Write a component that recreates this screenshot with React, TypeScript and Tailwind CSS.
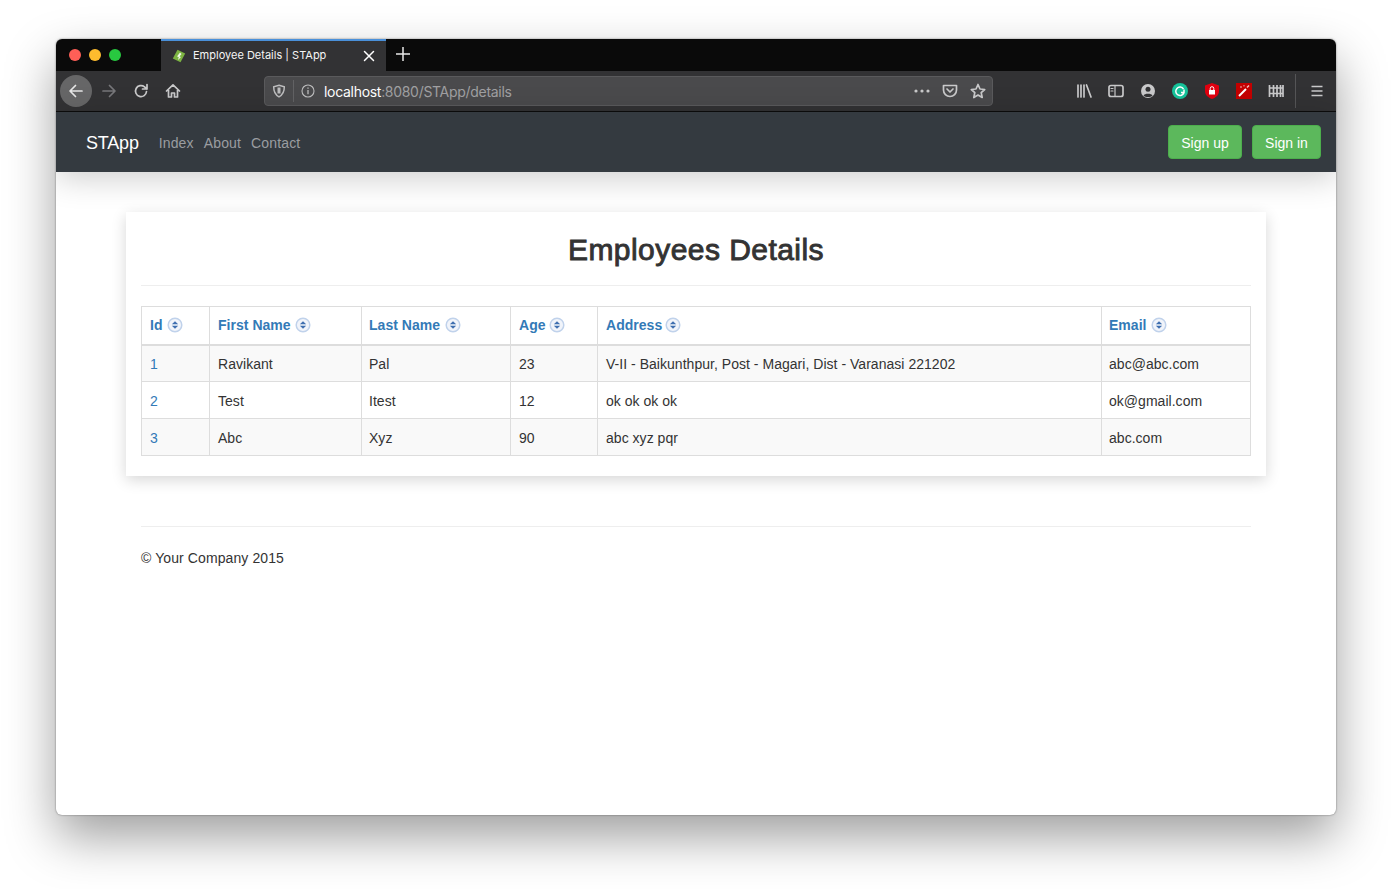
import React from 'react';

const rows = [
  { id: 1, first: 'Ravikant', last: 'Pal', age: 23, address: 'V-II - Baikunthpur, Post - Magari, Dist - Varanasi 221202', email: 'abc@abc.com', shade: true },
  { id: 2, first: 'Test', last: 'Itest', age: 12, address: 'ok ok ok ok', email: 'ok@gmail.com', shade: false },
  { id: 3, first: 'Abc', last: 'Xyz', age: 90, address: 'abc xyz pqr', email: 'abc.com', shade: true },
];

const columns = [
  { label: 'Id', width: 'w-[68px]', pad: 'pl-2', gap: 'ml-[4px]' },
  { label: 'First Name', width: 'w-[152px]', pad: 'pl-2', gap: 'ml-[4px]' },
  { label: 'Last Name', width: 'w-[149px]', pad: 'pl-[7px]', gap: 'ml-[5px]' },
  { label: 'Age', width: 'w-[87px]', pad: 'pl-2', gap: 'ml-[3px]' },
  { label: 'Address', width: 'w-[504px]', pad: 'pl-2', gap: 'ml-[3px]' },
  { label: 'Email', width: 'w-[149px]', pad: 'pl-[7px]', gap: 'ml-[4px]' },
];

const SortIcon: React.FC<{ className: string }> = ({ className }) => (
  <svg width="16" height="16" viewBox="0 0 16 16" className={`${className} shrink-0`}>
    <circle cx="8" cy="8" r="6.8" fill="#f1f4fa" stroke="#c0d2eb" strokeWidth="1.5" />
    <path d="M8 4.200 11.200 7.300H4.800zM8 11.800 4.800 8.700h6.400z" fill="#3f6fb0" />
  </svg>
);

const Stroke: React.FC<{ children: React.ReactNode; className?: string }> = ({ children, className }) => (
  <svg width="16" height="16" viewBox="0 0 16 16" fill="none" stroke="currentColor" strokeWidth="1.7" strokeLinecap="round" strokeLinejoin="round" className={className}>
    {children}
  </svg>
);

const BrowserChrome = () => (
  <>
    {/* tab strip */}
    <div className="h-8 bg-[#0a0a0a] flex items-stretch">
      <div className="w-[105px] flex items-center pl-[13px] gap-2">
        <span className="w-3 h-3 rounded-full bg-[#ff5f57]" />
        <span className="w-3 h-3 rounded-full bg-[#febc2e]" />
        <span className="w-3 h-3 rounded-full bg-[#28c840]" />
      </div>
      <div className="w-[225px] bg-[#323234] border-t-2 border-[#4a90d9] flex items-center pl-[11px] pr-[11px] text-[#f5f5f5] text-[11px] font-['Inter',sans-serif]">
        <svg width="14" height="14" viewBox="0 0 14 14" className="shrink-0">
          <path d="M5.500.800 13.200 4.500 8.500 13.200.800 9.500z" fill="#7cb342" />
          <path d="M8 3.500 9.500 5 7.500 7.500 9 8 6 11 6.800 8 5 7.500z" fill="#f1f8e9" />
        </svg>
        <span className="ml-[7px] mb-[2px] whitespace-nowrap">Employee Details | STApp</span>
        <svg width="12" height="12" viewBox="0 0 12 12" className="ml-auto text-white" stroke="currentColor" strokeWidth="1.5" strokeLinecap="round">
          <path d="M1.500 1.500l9 9M10.500 1.500l-9 9" />
        </svg>
      </div>
      <div className="flex items-center pl-[10px] pb-[2px] text-[#e8e8e8]">
        <svg width="14" height="14" viewBox="0 0 14 14" stroke="currentColor" strokeWidth="1.500">
          <path d="M7 0v14M0 7h14" />
        </svg>
      </div>
    </div>
    {/* toolbar */}
    <div className="h-[41px] bg-[#323234] border-b border-[#0c0c0c] flex items-center text-[#c9c9ca]">
      <div className="w-8 h-8 ml-[4px] rounded-full bg-[#666667] flex items-center justify-center text-[#e6e6e6]">
        <Stroke><path d="M14 8H2.500M7.500 2.500 2 8l5.500 5.500" /></Stroke>
      </div>
      <Stroke className="ml-[9px] text-[#77777a]"><path d="M2 8h11.500M8.500 2.500 14 8l-5.500 5.500" /></Stroke>
      <Stroke className="ml-[16px]"><path d="M13.500 8.500A5.500 5.500 0 1 1 11.500 3.800L14 6M14 1.500V6H9.500" /></Stroke>
      <Stroke className="ml-4"><path d="M1.500 8 8 1.800 14.500 8M3.500 7v7h3v-4h3v4h3V7" /></Stroke>
      <div className="ml-[83px] w-[729px] h-[30px] rounded-[4px] bg-[#4a4a4c] border border-[#5a5a5c] flex items-center text-[14px] font-['Inter',sans-serif]">
        <svg width="14" height="14" viewBox="0 0 14 14" fill="none" stroke="currentColor" strokeWidth="1.500" className="ml-[7px] text-[#bdbdbe]">
          <path d="M7 1.200 12.300 2.800C12.400 8 10.500 11 7 12.800 3.500 11 1.600 8 1.700 2.800z" />
          <path d="M7 3.500v6" strokeWidth="3" />
        </svg>
        <div className="w-px h-[22px] bg-[#626264] ml-[7px]" />
        <svg width="14" height="14" viewBox="0 0 14 14" fill="none" stroke="currentColor" strokeWidth="1.100" className="ml-[7px] text-[#bdbdbe]">
          <circle cx="7" cy="7" r="6" />
          <path d="M7 6v4.200M7 3.400v1.300" strokeWidth="1.300" />
        </svg>
        <span className="ml-[9px] mt-[2px] text-white leading-none tracking-[-0.3px]">localhost<span className="text-[#a0a0a2]">:8080/STApp/details</span></span>
        <div className="ml-auto flex items-center">
          <svg width="18" height="6" viewBox="0 0 18 6" fill="currentColor"><circle cx="3" cy="3" r="1.600" /><circle cx="9" cy="3" r="1.600" /><circle cx="15" cy="3" r="1.600" /></svg>
          <Stroke className="ml-[11px]"><path d="M1.500 2.500h13V7a6.500 6.500 0 0 1-13 0zM5 6l3 3 3-3" /></Stroke>
          <Stroke className="ml-3 mr-[6px]"><path d="M8 1.500 10 6l4.700.500-3.500 3.200 1 4.800L8 12l-4.200 2.500 1-4.800L1.300 6.500 6 6z" /></Stroke>
        </div>
      </div>
      <div className="ml-[83px] flex items-center">
        <Stroke><path d="M2 2v12M5 2v12M8 2v12M10.500 2 15 14" /></Stroke>
        <Stroke className="ml-4"><rect x="1" y="2.500" width="14" height="11" rx="2" /><path d="M7 2.500v11M3 5.500h2M3 8h2" strokeWidth="1.200" /></Stroke>
        <svg width="16" height="16" viewBox="0 0 16 16" className="ml-4">
          <circle cx="8" cy="8" r="7" fill="currentColor" />
          <circle cx="8" cy="6.300" r="2.500" fill="#323234" />
          <path d="M3.500 12.500c1-2.500 8-2.500 9 0-2 2-7 2-9 0z" fill="#323234" />
        </svg>
        <svg width="16" height="16" viewBox="0 0 16 16" className="ml-4" fill="none">
          <circle cx="8" cy="8" r="8" fill="#15c39a" />
          <path d="M11.500 6A4.200 4.200 0 1 0 12 9.500M12 6.500V9.500H9" stroke="#fff" strokeWidth="1.500" />
        </svg>
        <svg width="14" height="16" viewBox="0 0 14 16" className="ml-[17px]">
          <path d="M7 0 14 2.500V8c0 4-3 6.500-7 8-4-1.500-7-4-7-8V2.500z" fill="#e0000f" />
          <rect x="4" y="7" width="6" height="4.500" fill="#fff" />
          <path d="M5.200 7V5.500a1.800 1.800 0 0 1 3.600 0V7" fill="none" stroke="#fff" strokeWidth="1" />
        </svg>
        <svg width="16" height="16" viewBox="0 0 16 16" className="ml-[17px]">
          <rect width="16" height="16" fill="#c40000" />
          <path d="M3 13 10 6" stroke="#fff" strokeWidth="2" />
          <path d="M11 4.500 13 2.500" stroke="#f3c0c0" strokeWidth="1.500" />
          <circle cx="5" cy="4" r=".7" fill="#fff" />
          <circle cx="8" cy="2.800" r=".6" fill="#fff" />
        </svg>
        <Stroke className="ml-4"><path d="M1.500 2v12M5.500 2v12M9 2v12M12.500 2v12M15 2v12M1 5h14M1 10.500h14" strokeLinecap="butt" /></Stroke>
        <div className="w-px h-[34px] bg-[#555557] ml-[11px]" />
        <Stroke className="ml-[13px]"><path d="M2.500 3.500h11M2.500 8h11M2.500 12.500h11" strokeLinecap="butt" /></Stroke>
      </div>
    </div>
  </>
);

const Navbar = () => (
  <nav className="relative z-10 h-[60px] bg-[#343a40] flex items-center pl-[30px] pr-[15px] shadow-[0_6px_32px_rgba(0,0,0,0.2)]">
    <span className="mt-[2px] text-[18px] text-white tracking-[-0.2px]">STApp</span>
    <div className="ml-[20px] mt-[2px] flex gap-[10px] text-[14px] text-[#9a9da1] tracking-[0.15px]">
      <span>Index</span>
      <span>About</span>
      <span>Contact</span>
    </div>
    <div className="ml-auto flex gap-[10px]">
      <button className="w-[74px] h-[34px] pt-[2px] rounded-[4px] bg-[#5cb85c] border border-[#4cae4c] text-white text-[14px]">Sign up</button>
      <button className="w-[69px] h-[34px] pt-[2px] rounded-[4px] bg-[#5cb85c] border border-[#4cae4c] text-white text-[14px]">Sign in</button>
    </div>
  </nav>
);

const EmployeesTable = () => (
  <table className="table-fixed w-[1109px] border-collapse text-[14px] text-[#333333] mt-5 tracking-[0.03px]">
    <thead>
      <tr>
        {columns.map(col => (
          <th key={col.label} className={`${col.width} ${col.pad} h-[38px] border border-[#dddddd] border-b-2 text-left font-bold`}>
            <span className="flex items-center text-[#337ab7]">
              {col.label}
              <SortIcon className={col.gap} />
            </span>
          </th>
        ))}
      </tr>
    </thead>
    <tbody>
      {rows.map(row => {
        const cells = [row.id, row.first, row.last, row.age, row.address, row.email];
        return (
          <tr key={row.id} className={row.shade ? 'bg-[#f9f9f9]' : 'bg-white'}>
            {cells.map((value, i) => (
              <td key={i} className={`${columns[i].pad} h-[37px] pt-[2px] border border-[#dddddd] ${i === 0 ? 'text-[#337ab7]' : ''}`}>{value}</td>
            ))}
          </tr>
        );
      })}
    </tbody>
  </table>
);

export default function App() {
  return (
    <div className="w-[1392px] h-[889px] bg-white overflow-hidden pt-[39px] pl-[56px] font-['Liberation_Sans',Arial,sans-serif]">
      {/* window */}
      <div className="w-[1280px] h-[776px] rounded-[6px] overflow-hidden bg-white shadow-[0_22px_50px_rgba(0,0,0,0.38),0_0_2px_rgba(0,0,0,0.5)]">
        <BrowserChrome />
        <Navbar />
        <div className="relative z-20 px-[70px] pt-10">
          <div className="h-[264px] bg-white px-[15px] pt-[15px] shadow-[0_4px_14px_rgba(0,0,0,0.16)]">
            <h1 className="text-[30px] leading-[46px] font-normal [-webkit-text-stroke:0.9px_#333333] text-[#333333] text-center h-[59px] border-b border-[#eeeeee] tracking-[0.45px]">Employees Details</h1>
            <EmployeesTable />
          </div>
        </div>
        <footer className="mx-[85px] mt-[50px] border-t border-[#eeeeee] pt-[21px] text-[14px] leading-5 text-[#333333] tracking-[0.1px]">© Your Company 2015</footer>
      </div>
    </div>
  );
}
